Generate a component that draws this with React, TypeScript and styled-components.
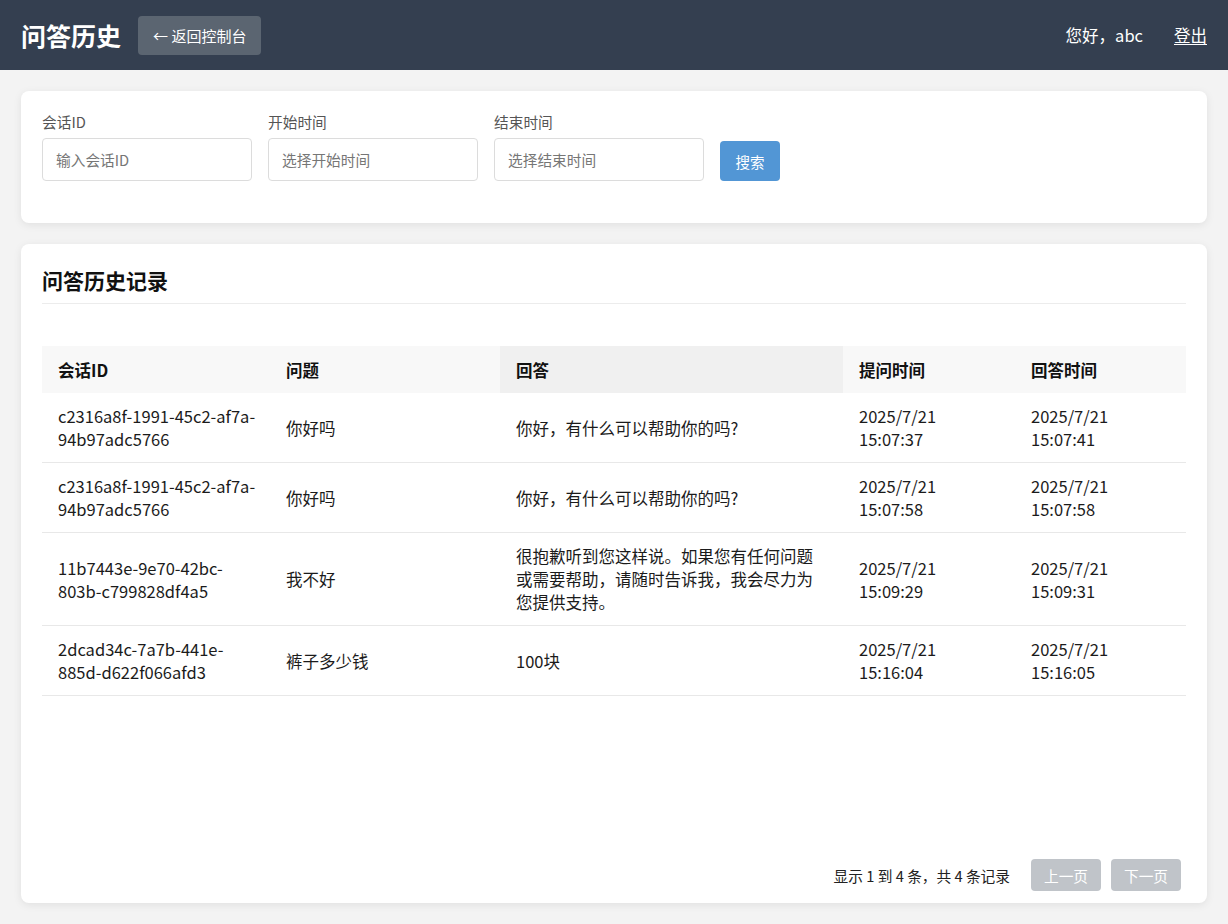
import React from "react";
import styled, { createGlobalStyle } from "styled-components";

const GlobalStyle = createGlobalStyle`
  html, body { margin: 0; padding: 0; }
  body {
    background: #f3f3f3;
    font-family: "Noto Sans CJK SC", "Noto Sans", sans-serif;
    color: #222;
  }
  * { box-sizing: border-box; }
`;

const Page = styled.div`
  min-height: 100vh;
  display: flex;
  flex-direction: column;
`;

const Header = styled.header`
  height: 70px;
  background: #343f50;
  padding: 0 21px;
  display: flex;
  align-items: center;
  justify-content: space-between;
  color: #fff;
`;

const HeaderLeft = styled.div`
  display: flex;
  align-items: center;
  gap: 17px;
`;

const Title = styled.h1`
  margin: 0;
  font-size: 25px;
  font-weight: 700;
  line-height: 1;
`;

const BackButton = styled.button`
  height: 39px;
  padding: 0 15px;
  border: none;
  border-radius: 4px;
  background: #5b6571;
  color: #fff;
  font-family: inherit;
  font-size: 15px;
  cursor: pointer;
`;

const HeaderRight = styled.div`
  display: flex;
  align-items: center;
  gap: 31px;
  font-size: 16.5px;
`;

const Logout = styled.a`
  color: #fff;
  text-decoration: underline;
  text-underline-offset: 2px;
  cursor: pointer;
`;

const Main = styled.main`
  flex: 1;
  display: flex;
  flex-direction: column;
  gap: 21px;
  padding: 21px;
`;

const Card = styled.section<{ $grow?: boolean }>`
  background: #fff;
  border-radius: 8px;
  box-shadow: 0 2px 8px rgba(0, 0, 0, 0.08);
  padding: 21px;
  ${(p) => (p.$grow ? "flex: 1; display: flex; flex-direction: column; padding-bottom: 12px;" : "padding-bottom: 42px;")}
`;

const FilterRow = styled.div`
  display: flex;
  align-items: flex-end;
  gap: 16px;
`;

const Field = styled.label`
  display: flex;
  flex-direction: column;
  gap: 6px;
`;

const FieldLabel = styled.span`
  font-size: 14.7px;
  line-height: 20px;
  color: #555;
`;

const Input = styled.input`
  width: 210px;
  height: 43px;
  padding: 0 13px;
  border: 1px solid #dcdcdc;
  border-radius: 4px;
  font-family: inherit;
  font-size: 14.7px;
  color: #333;
  outline: none;
  &::placeholder { color: #767676; }
`;

const SearchButton = styled.button`
  width: 60px;
  height: 40px;
  border: none;
  border-radius: 4px;
  background: #5296d5;
  color: #fff;
  font-family: inherit;
  font-size: 14.5px;
  cursor: pointer;
`;

const SectionTitle = styled.h2`
  margin: 0;
  font-size: 21px;
  font-weight: 700;
  line-height: 30px;
  padding-bottom: 8px;
  border-bottom: 1px solid #ececec;
  color: #111;
`;

const Table = styled.table`
  margin-top: 42px;
  width: 100%;
  border-collapse: collapse;
  table-layout: fixed;
`;

const Th = styled.th<{ $active?: boolean }>`
  height: 47px;
  padding: 0 16px;
  text-align: left;
  font-size: 16.5px;
  font-weight: 700;
  color: #111;
  background: ${(p) => (p.$active ? "#f0f0f0" : "#f8f8f8")};
`;

const Row = styled.tr`
  border-bottom: 1px solid #e8e8e8;
`;

const Td = styled.td<{ $tight?: boolean }>`
  padding: 12px ${(p) => (p.$tight ? "6px" : "16px")} 11px 16px;
  font-size: 16.5px;
  line-height: 23px;
  color: #1b1b1b;
  vertical-align: middle;
  word-break: break-word;
`;

const Pagination = styled.div`
  margin-top: auto;
  display: flex;
  justify-content: flex-end;
  align-items: center;
  gap: 21px;
  padding-right: 5px;
`;

const PageInfo = styled.span`
  font-size: 14.7px;
  color: #222;
`;

const PageButtons = styled.div`
  display: flex;
  gap: 10px;
`;

const PageButton = styled.button`
  width: 70px;
  height: 32px;
  border: none;
  border-radius: 4px;
  background: #c0c4c9;
  color: #fff;
  font-family: inherit;
  font-size: 14.7px;
  cursor: not-allowed;
`;

const rows = [
  {
    id: "c2316a8f-1991-45c2-af7a-94b97adc5766",
    q: "你好吗",
    a: "你好，有什么可以帮助你的吗?",
    qt: ["2025/7/21", "15:07:37"],
    at: ["2025/7/21", "15:07:41"],
  },
  {
    id: "c2316a8f-1991-45c2-af7a-94b97adc5766",
    q: "你好吗",
    a: "你好，有什么可以帮助你的吗?",
    qt: ["2025/7/21", "15:07:58"],
    at: ["2025/7/21", "15:07:58"],
  },
  {
    id: "11b7443e-9e70-42bc-803b-c799828df4a5",
    q: "我不好",
    a: "很抱歉听到您这样说。如果您有任何问题或需要帮助，请随时告诉我，我会尽力为您提供支持。",
    qt: ["2025/7/21", "15:09:29"],
    at: ["2025/7/21", "15:09:31"],
  },
  {
    id: "2dcad34c-7a7b-441e-885d-d622f066afd3",
    q: "裤子多少钱",
    a: "100块",
    qt: ["2025/7/21", "15:16:04"],
    at: ["2025/7/21", "15:16:05"],
  },
];

export default function App() {
  return (
    <Page>
      <GlobalStyle />
      <Header>
        <HeaderLeft>
          <Title>问答历史</Title>
          <BackButton>← 返回控制台</BackButton>
        </HeaderLeft>
        <HeaderRight>
          <span>您好，abc</span>
          <Logout>登出</Logout>
        </HeaderRight>
      </Header>
      <Main>
        <Card>
          <FilterRow>
            <Field>
              <FieldLabel>会话ID</FieldLabel>
              <Input placeholder="输入会话ID" />
            </Field>
            <Field>
              <FieldLabel>开始时间</FieldLabel>
              <Input placeholder="选择开始时间" />
            </Field>
            <Field>
              <FieldLabel>结束时间</FieldLabel>
              <Input placeholder="选择结束时间" />
            </Field>
            <SearchButton>搜索</SearchButton>
          </FilterRow>
        </Card>
        <Card $grow>
          <SectionTitle>问答历史记录</SectionTitle>
          <Table>
            <colgroup>
              <col style={{ width: 228 }} />
              <col style={{ width: 230 }} />
              <col style={{ width: 343 }} />
              <col style={{ width: 172 }} />
              <col />
            </colgroup>
            <thead>
              <tr>
                <Th>会话ID</Th>
                <Th>问题</Th>
                <Th $active>回答</Th>
                <Th>提问时间</Th>
                <Th>回答时间</Th>
              </tr>
            </thead>
            <tbody>
              {rows.map((r, i) => (
                <Row key={i}>
                  <Td $tight>{r.id}</Td>
                  <Td>{r.q}</Td>
                  <Td>{r.a}</Td>
                  <Td>
                    {r.qt[0]}
                    <br />
                    {r.qt[1]}
                  </Td>
                  <Td>
                    {r.at[0]}
                    <br />
                    {r.at[1]}
                  </Td>
                </Row>
              ))}
            </tbody>
          </Table>
          <Pagination>
            <PageInfo>显示 1 到 4 条，共 4 条记录</PageInfo>
            <PageButtons>
              <PageButton disabled>上一页</PageButton>
              <PageButton disabled>下一页</PageButton>
            </PageButtons>
          </Pagination>
        </Card>
      </Main>
    </Page>
  );
}
